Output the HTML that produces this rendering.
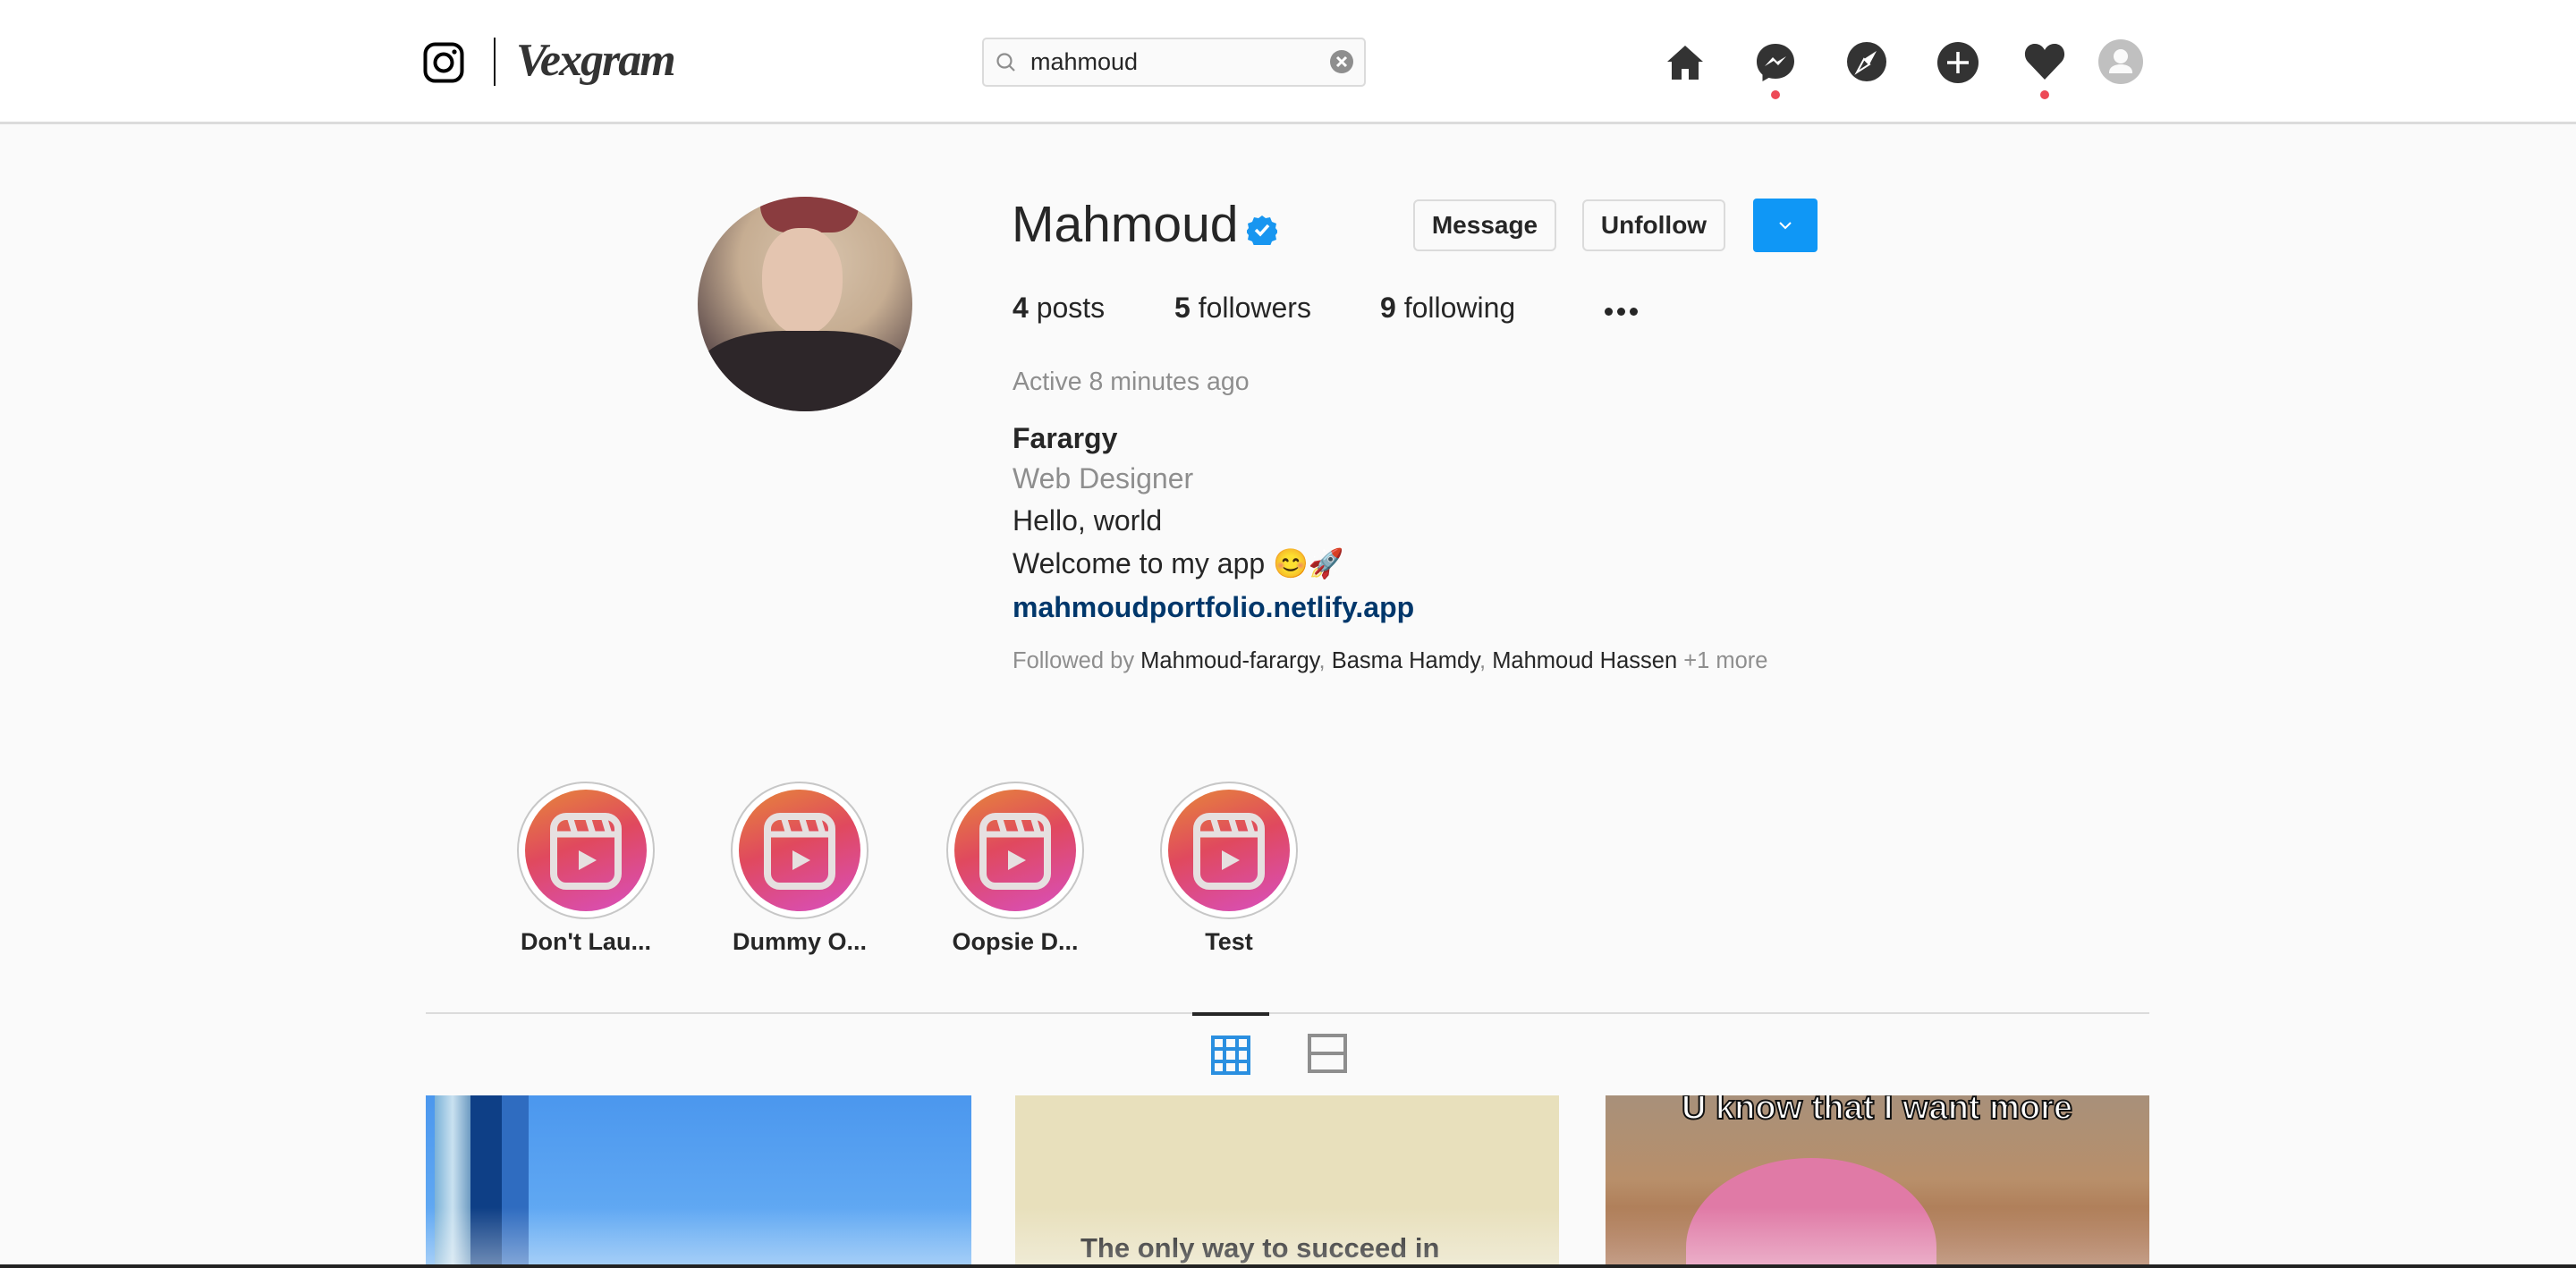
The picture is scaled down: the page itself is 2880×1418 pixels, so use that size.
<!DOCTYPE html>
<html><head><meta charset="utf-8"><style>
*{margin:0;padding:0;box-sizing:border-box}
body{width:2880px;height:1418px;overflow:hidden;background:#fafafa;font-family:"Liberation Sans",sans-serif;color:#262626;position:relative}
.a{position:absolute;white-space:nowrap}
header{position:absolute;left:0;top:0;width:2880px;height:139px;background:#fff;border-bottom:3px solid #dbdbdb}
.btn{position:absolute;top:223px;height:58px;border:2px solid #dbdbdb;border-radius:6px;background:#fafafa;font-weight:bold;font-size:28px;display:flex;align-items:center;justify-content:center}
.hl{position:absolute;top:874px;width:154px;height:154px;border:2px solid #c7c7c7;border-radius:50%;background:#fff}
.hl .in{position:absolute;left:7px;top:7px;width:136px;height:136px;border-radius:50%;background:linear-gradient(160deg,#e6873a 0%,#e0495e 45%,#d84fc0 100%)}
.hlt{position:absolute;top:1038px;width:240px;text-align:center;font-weight:bold;font-size:27px}
.bio{font-size:32px}
</style></head><body>
<header>
<svg class="a" style="left:473px;top:47px" width="46" height="46" viewBox="0 0 46 46"><rect x="2.5" y="2.5" width="41" height="41" rx="11" fill="none" stroke="#000" stroke-width="4"/><circle cx="23" cy="23" r="9.5" fill="none" stroke="#000" stroke-width="4"/><circle cx="35" cy="11" r="2.6" fill="#000"/></svg>
<div class="a" style="left:552px;top:42px;width:2px;height:54px;background:#111"></div>
<div class="a" style="left:577px;top:38px;font-family:'Liberation Serif',serif;font-style:italic;font-weight:bold;font-size:52px;color:#333;letter-spacing:-2px">Vexgram</div>
<div class="a" style="left:1098px;top:42px;width:429px;height:55px;border:2px solid #dbdbdb;border-radius:5px;background:#fafafa"></div>
<svg class="a" style="left:1113px;top:58px" width="24" height="24" viewBox="0 0 24 24"><circle cx="10" cy="10" r="7.5" fill="none" stroke="#8e8e8e" stroke-width="2.2"/><line x1="15.5" y1="15.5" x2="21" y2="21" stroke="#8e8e8e" stroke-width="2.2"/></svg>
<div class="a" style="left:1152px;top:54px;font-size:27px;color:#262626">mahmoud</div>
<svg class="a" style="left:1486px;top:55px" width="28" height="28" viewBox="0 0 28 28"><circle cx="14" cy="14" r="13" fill="#8e8e8e"/><path d="M9 9L19 19M19 9L9 19" stroke="#fff" stroke-width="3"/></svg>
<svg class="a" style="left:1862px;top:48px" width="44" height="44" viewBox="0 0 44 44"><path d="M22 3L2 21h5v20h11V29h8v12h11V21h5z" fill="#333"/></svg>
<svg class="a" style="left:1962px;top:47px" width="46" height="46" viewBox="0 0 46 46"><path d="M23 2C11 2 2 10.5 2 22c0 6 2.5 11 6.5 14.5V44l7-4c2.3.6 4.8 1 7.5 1 12 0 21-8.5 21-19.5S35 2 23 2z" fill="#333"/><path d="M11 27l9-10 5 5 10-6-9 10-5-5z" fill="#fff"/></svg>
<div class="a" style="left:1980px;top:101px;width:10px;height:10px;border-radius:50%;background:#ed4956"></div>
<svg class="a" style="left:2065px;top:47px" width="44" height="44" viewBox="0 0 44 44"><circle cx="22" cy="22" r="22" fill="#333"/><path d="M33 10L25 25 11 34 19 19z" fill="#fff"/><path d="M19 19l6 6-14 9z" fill="#333"/><path d="M19 19l6 6-14 9z" fill="none" stroke="#fff" stroke-width="2"/></svg>
<svg class="a" style="left:2166px;top:47px" width="46" height="46" viewBox="0 0 46 46"><circle cx="23" cy="23" r="23" fill="#333"/><path d="M23 11v24M11 23h24" stroke="#fff" stroke-width="3.5"/></svg>
<svg class="a" style="left:2263px;top:47px" width="46" height="42" viewBox="0 0 46 42"><path d="M23 42L4 22C-2 15 1 3 11 2c6-.5 10 3 12 7 2-4 6-7.5 12-7 10 1 13 13 7 20z" fill="#333"/></svg>
<div class="a" style="left:2281px;top:101px;width:10px;height:10px;border-radius:50%;background:#ed4956"></div>
<svg class="a" style="left:2346px;top:44px" width="50" height="50" viewBox="0 0 50 50"><circle cx="25" cy="25" r="25" fill="#c0c0c0"/><circle cx="25" cy="19" r="8" fill="#fafafa"/><path d="M12 37c0-6 6-9 13-9s13 3 13 9v1H12z" fill="#fafafa"/></svg>
</header>

<div class="a" style="left:780px;top:220px;width:240px;height:240px;border-radius:50%;overflow:hidden;background:radial-gradient(circle at 55% 30%,#d8c4ad 0%,#c6ad92 40%,#6d5a56 70%,#2a2325 100%)">
<div class="a" style="left:70px;top:0;width:110px;height:40px;background:#8a3c3f;border-radius:0 0 30px 30px"></div>
<div class="a" style="left:72px;top:35px;width:90px;height:120px;background:#e4c5b0;border-radius:45% 45% 50% 50%"></div>
<div class="a" style="left:0;top:150px;width:240px;height:110px;background:#2d2629;border-radius:40% 40% 0 0"></div>
</div>

<div class="a" style="left:1131px;top:218px;font-size:57px">Mahmoud</div>
<svg class="a" style="left:1394px;top:240px" width="34" height="34" viewBox="0 0 34 34"><path d="M17 1l4 3 5-1 2 5 5 2-1 5 3 4-3 4 1 5-5 2-2 5-5-1-4 3-4-3-5 1-2-5-5-2 1-5-3-4 3-4-1-5 5-2 2-5 5 1z" fill="#1896f0"/><path d="M10 17l5 5 9-10" fill="none" stroke="#fff" stroke-width="3.5"/></svg>
<div class="btn" style="left:1580px;width:160px">Message</div>
<div class="btn" style="left:1769px;width:160px">Unfollow</div>
<div class="a" style="left:1960px;top:222px;width:72px;height:60px;background:#0f97f6;border-radius:4px"></div>
<svg class="a" style="left:1987px;top:246px" width="18" height="12" viewBox="0 0 18 12"><path d="M3 3l6 6 6-6" fill="none" stroke="#fff" stroke-width="2"/></svg>

<div class="a" style="left:1132px;top:326px;font-size:32px"><b>4</b> posts</div>
<div class="a" style="left:1313px;top:326px;font-size:32px"><b>5</b> followers</div>
<div class="a" style="left:1543px;top:326px;font-size:32px"><b>9</b> following</div>
<div class="a" style="left:1794px;top:344px;width:9px;height:9px;border-radius:50%;background:#262626;box-shadow:14px 0 #262626,28px 0 #262626"></div>

<div class="a" style="left:1132px;top:411px;font-size:28.5px;color:#8e8e8e">Active 8 minutes ago</div>
<div class="a bio" style="left:1132px;top:472px;font-weight:bold">Farargy</div>
<div class="a bio" style="left:1132px;top:517px;color:#8e8e8e">Web Designer</div>
<div class="a bio" style="left:1132px;top:564px">Hello, world</div>
<div class="a bio" style="left:1132px;top:611px">Welcome to my app 😊🚀</div>
<div class="a bio" style="left:1132px;top:661px;font-weight:bold;color:#00376b">mahmoudportfolio.netlify.app</div>
<div class="a" style="left:1132px;top:725px;font-size:25.5px;color:#8e8e8e">Followed by <span style="color:#262626">Mahmoud-farargy</span>, <span style="color:#262626">Basma Hamdy</span>, <span style="color:#262626">Mahmoud Hassen</span> +1 more</div>

<div class="hl" style="left:578px"><div class="in"></div></div>
<div class="hl" style="left:817px"><div class="in"></div></div>
<div class="hl" style="left:1058px"><div class="in"></div></div>
<div class="hl" style="left:1297px"><div class="in"></div></div>
<svg class="a" style="left:0;top:0;pointer-events:none" width="2880" height="1418">
<defs><g id="r"><rect x="-36" y="-38" width="72" height="78" rx="14" fill="none" stroke="#e6e0e0" stroke-width="8"/><path d="M-36-18H36M-18-38l6 20M2-38l6 20M20-38l6 20" stroke="#e6e0e0" stroke-width="7"/><path d="M-8 0v22L12 11z" fill="#e6e0e0"/></g></defs>
<use href="#r" x="655" y="951"/><use href="#r" x="894" y="951"/><use href="#r" x="1135" y="951"/><use href="#r" x="1374" y="951"/>
</svg>
<div class="hlt" style="left:535px">Don't Lau...</div>
<div class="hlt" style="left:774px">Dummy O...</div>
<div class="hlt" style="left:1015px">Oopsie D...</div>
<div class="hlt" style="left:1254px">Test</div>

<div class="a" style="left:476px;top:1132px;width:1927px;height:2px;background:#dbdbdb"></div>
<div class="a" style="left:1333px;top:1132px;width:86px;height:4px;background:#262626"></div>
<svg class="a" style="left:1354px;top:1158px" width="44" height="44" viewBox="0 0 44 44"><rect x="2" y="2" width="40" height="40" fill="none" stroke="#2a8fe0" stroke-width="4"/><path d="M15 2v40M29 2v40M2 15h40M2 29h40" stroke="#2a8fe0" stroke-width="4"/></svg>
<svg class="a" style="left:1462px;top:1156px" width="44" height="44" viewBox="0 0 44 44"><rect x="2" y="2" width="40" height="40" fill="none" stroke="#8e8e8e" stroke-width="4"/><path d="M2 22h40" stroke="#8e8e8e" stroke-width="4"/></svg>

<div class="a" style="left:476px;top:1225px;width:610px;height:189px;background:linear-gradient(180deg,#4b97ee 0%,#6ab0f5 100%);overflow:hidden">
<div class="a" style="left:10px;top:0;width:40px;height:189px;background:linear-gradient(90deg,#7bb2d8,#c9e1f0,#6d9bc2)"></div>
<div class="a" style="left:50px;top:0;width:35px;height:189px;background:#0e3f86"></div>
<div class="a" style="left:85px;top:0;width:30px;height:189px;background:#2f6cc0"></div>
</div>
<div class="a" style="left:1135px;top:1225px;width:608px;height:189px;background:#e8e0bc;overflow:hidden">
<div class="a" style="left:73px;top:154px;font-size:31px;line-height:34px;font-weight:bold;color:#1a1a1a">The only way to succeed in</div>
</div>
<div class="a" style="left:1795px;top:1225px;width:608px;height:189px;background:linear-gradient(180deg,#a8907a 0%,#b88f6a 50%,#a0603a 100%);overflow:hidden">
<div class="a" style="left:90px;top:70px;width:280px;height:200px;border-radius:50% 50% 0 0;background:#e07aa6"></div>
<div class="a" style="left:85px;top:-8px;font-size:38px;line-height:44px;font-weight:bold;color:#fff;-webkit-text-stroke:2px #111">U know that I want more</div>
</div>
<div class="a" style="left:0;top:1350px;width:2880px;height:64px;background:linear-gradient(180deg,rgba(250,250,250,0),rgba(250,250,250,.4))"></div>
<div class="a" style="left:0;top:1414px;width:2880px;height:4px;background:#222"></div>
</body></html>
